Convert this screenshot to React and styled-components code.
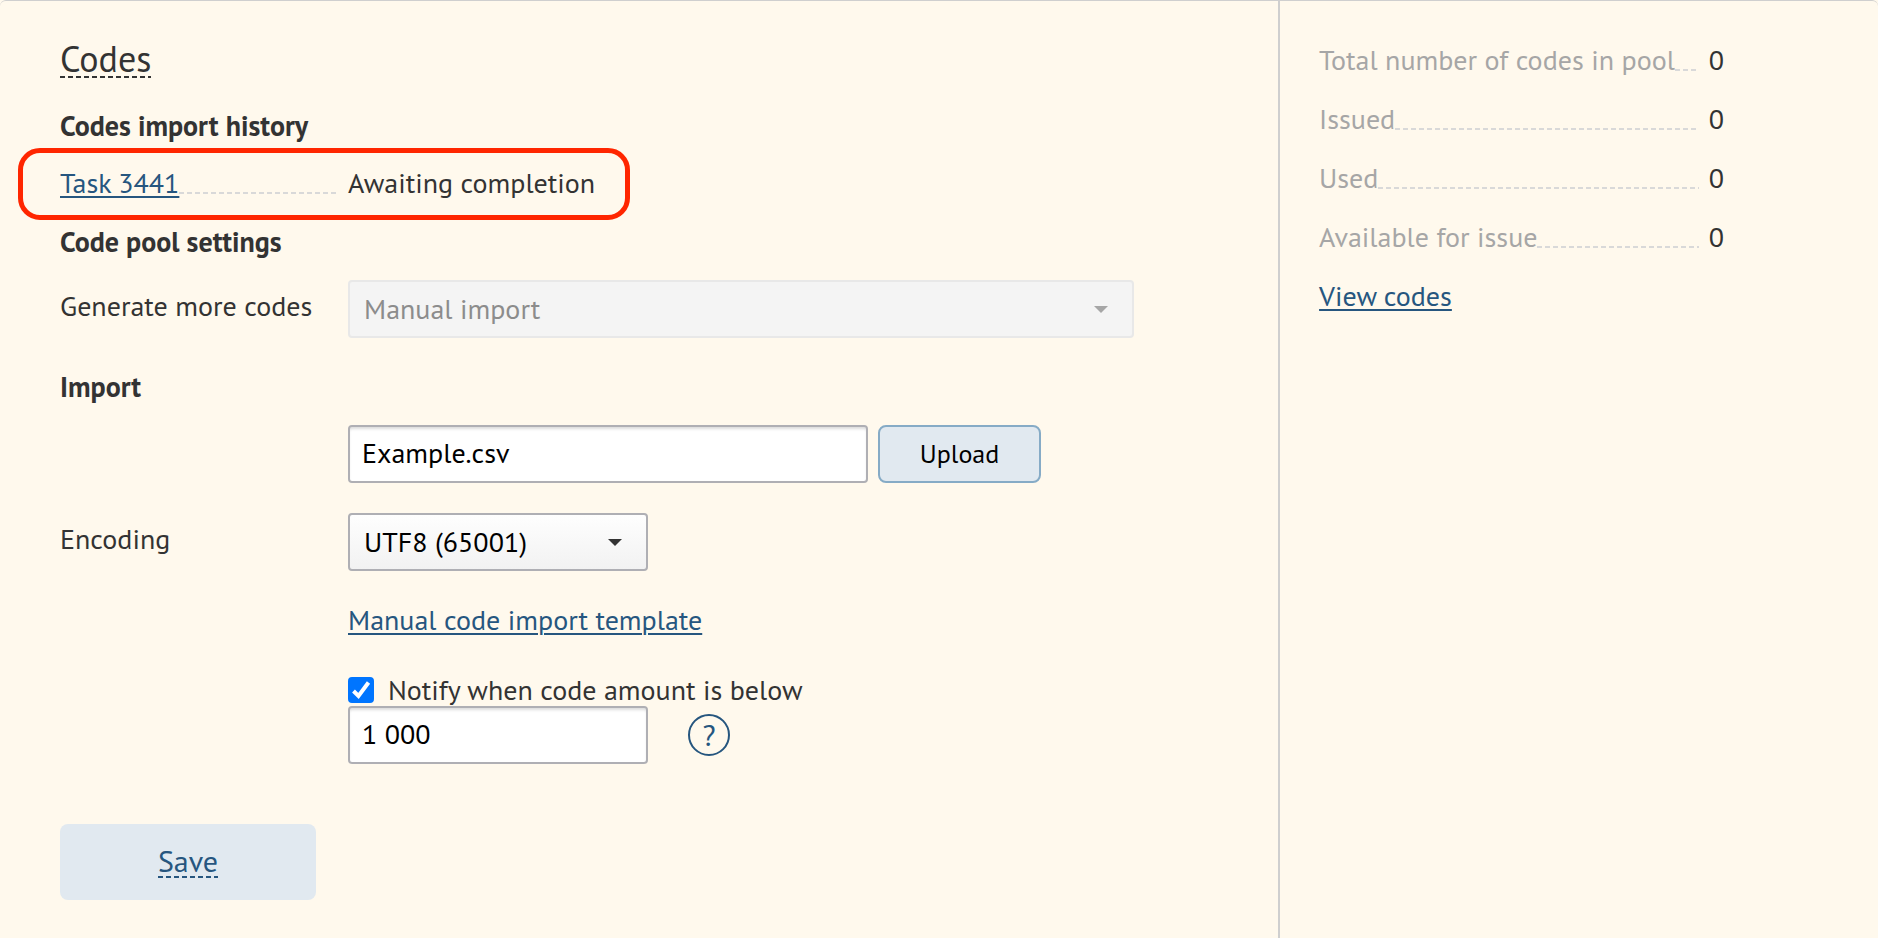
import React from "react";
import styled, { createGlobalStyle, css } from "styled-components";

const c = {
  cream: "#fff9ed",
  text: "#333333",
  muted: "#a6a6a6",
  link: "#26567f",
  line: "#cfcfcf",
  dash: "#d9d9d9",
  field: "#afafb4",
  pale: "#e1e9f0",
  red: "#ff2600",
};

const GlobalStyle = createGlobalStyle`
  *, *::before, *::after { box-sizing: border-box; }
  body {
    margin: 0;
    background: ${c.cream};
    color: ${c.text};
    font-family: "PT Sans", Lato, "Open Sans", sans-serif;
    font-size: 28px;
    line-height: 32px;
  }
  button, input, select { font: inherit; }
`;

const dashes = css`
  background: repeating-linear-gradient(to right, currentColor 0 5px, transparent 5px 8px)
    left bottom / 100% 2px no-repeat;
`;

const Card = styled.div`
  display: grid;
  grid-template-columns: minmax(0, 49fr) minmax(0, 23fr);
  min-height: 100vh;
  border-top: 1px solid ${c.line};
  border-radius: 6px 6px 0 0;
`;

const Form = styled.form`
  padding: 41px 60px 38px;
`;

const Title = styled.h1`
  margin: 0 0 32px;
  font-size: 36px;
  font-weight: 400;
  line-height: 34px;
  display: flex;
`;

const DashedText = styled.span`
  padding-bottom: 2px;
  ${dashes}
`;

const SectionTitle = styled.h2`
  margin: 0;
  font-size: 28px;
  line-height: 32px;
  font-weight: 700;
`;

const Highlight = styled.div`
  width: 612px;
  margin: 6px 0 6px -42px;
  padding: 14px 0 16px 37px;
  border: 5px solid ${c.red};
  border-radius: 22px;
`;

const Row = styled.div`
  display: grid;
  grid-template-columns: 288px minmax(0, 1fr);
  margin: ${(p) => p.$margin || "0"};
`;

const Label = styled.label`
  padding-top: 10px;
`;

const Controls = styled.div`
  grid-column: 2;
  display: flex;
  align-items: center;
  gap: ${(p) => p.$gap || 0}px;
`;

const Leader = styled.div`
  display: flex;
  align-items: flex-start;
  margin-right: 10px;
  &::after {
    content: "";
    flex: 1;
    height: 27px;
    color: ${c.dash};
    ${dashes}
  }
`;

const Link = styled.a`
  color: ${c.link};
  text-decoration: underline;
  text-decoration-thickness: 2px;
  text-underline-offset: 3px;
`;

const fieldBox = css`
  height: 58px;
  border: 2px solid ${c.field};
  border-radius: 4px;
  color: #000;
`;

const TextInput = styled.input`
  ${fieldBox}
  width: ${(p) => p.$width}px;
  padding: 0 12px 4px;
  background: #fff;
  box-shadow: inset 0 3px 3px -1px rgba(0, 0, 0, 0.14);
`;

const SelectWrap = styled.div`
  position: relative;
  width: 100%;
  max-width: ${(p) => p.$width}px;
  svg {
    position: absolute;
    right: 26px;
    top: 26px;
    pointer-events: none;
  }
`;

const Select = styled.select`
  ${fieldBox}
  appearance: none;
  display: block;
  width: 100%;
  padding: 0 48px 0 14px;
  background: linear-gradient(#fefefe, #f2f2f2);
  &:disabled {
    opacity: 1;
    color: #8c8c8c;
    background: #f4f4f4;
    border-color: #e8e8e8;
  }
`;

const UploadButton = styled.button`
  width: 163px;
  height: 58px;
  border: 2px solid #86abc6;
  border-radius: 8px;
  background: ${c.pale};
  color: #000;
  font-size: 26px;
`;

const CheckLabel = styled.label`
  display: flex;
  align-items: center;
  gap: 14px;
`;

const CheckBox = styled.span`
  position: relative;
  display: flex;
  svg {
    position: absolute;
    inset: 0;
    pointer-events: none;
  }
`;

const CheckInput = styled.input`
  appearance: none;
  width: 26px;
  height: 26px;
  margin: 0;
  border-radius: 4px;
  border: 2px solid ${c.field};
  background: #fff;
  &:checked {
    border-color: #0075ff;
    background: #0075ff;
  }
  &:not(:checked) + svg { display: none; }
`;

const HelpButton = styled.button`
  width: 42px;
  height: 42px;
  padding: 0;
  border: 2px solid ${c.link};
  border-radius: 50%;
  background: none;
  color: ${c.link};
  font-size: 30px;
`;

const SaveButton = styled.button`
  display: flex;
  justify-content: center;
  align-items: center;
  width: 256px;
  height: 76px;
  margin-top: 60px;
  border: 0;
  border-radius: 8px;
  background: ${c.pale};
  color: ${c.link};
  font-size: 30px;
  line-height: 30px;
`;

const Summary = styled.aside`
  padding: 43px 39px;
  border-left: 2px solid ${c.line};
`;

const Stats = styled.dl`
  max-width: 405px;
  margin: 0 0 27px;
  display: grid;
  gap: 27px;
`;

const Stat = styled.div`
  display: grid;
  grid-template-columns: minmax(0, 1fr) auto;
`;

const StatName = styled(Leader).attrs({ as: "dt" })`
  color: ${c.muted};
  white-space: nowrap;
`;

const StatValue = styled.dd`
  margin: 0;
`;

const Arrow = ({ color }) => (
  <svg width="14" height="7" viewBox="0 0 14 7" aria-hidden="true">
    <path d="M0 0h14L7 7z" fill={color} />
  </svg>
);

const stats = [
  ["Total number of codes in pool", 0],
  ["Issued", 0],
  ["Used", 0],
  ["Available for issue", 0],
];

export default function App() {
  return (
    <>
      <GlobalStyle />
      <Card>
        <Form onSubmit={(e) => e.preventDefault()}>
          <Title><DashedText>Codes</DashedText></Title>

          <SectionTitle>Codes import history</SectionTitle>
          <Highlight>
            <Row>
              <Leader><Link href="#task-3441">Task 3441</Link></Leader>
              <span>Awaiting completion</span>
            </Row>
          </Highlight>

          <SectionTitle>Code pool settings</SectionTitle>
          <Row $margin="22px 0 33px">
            <Label htmlFor="generate">Generate more codes</Label>
            <SelectWrap $width={786}>
              <Select id="generate" disabled defaultValue="manual">
                <option value="manual">Manual import</option>
              </Select>
              <Arrow color="#a6a6a6" />
            </SelectWrap>
          </Row>

          <SectionTitle>Import</SectionTitle>
          <Row $margin="22px 0 30px">
            <Controls $gap={10}>
              <TextInput $width={520} aria-label="Import file" defaultValue="Example.csv" />
              <UploadButton type="button">Upload</UploadButton>
            </Controls>
          </Row>
          <Row>
            <Label htmlFor="encoding">Encoding</Label>
            <SelectWrap $width={300}>
              <Select id="encoding" defaultValue="utf8">
                <option value="utf8">UTF8 (65001)</option>
              </Select>
              <Arrow color={c.text} />
            </SelectWrap>
          </Row>
          <Row $margin="33px 0 38px">
            <Controls>
              <Link href="#template">Manual code import template</Link>
            </Controls>
          </Row>
          <Row>
            <Controls>
              <CheckLabel>
                <CheckBox>
                  <CheckInput type="checkbox" defaultChecked />
                  <svg width="26" height="26" viewBox="0 0 26 26" aria-hidden="true">
                    <path d="M5.500 14l5 5L20.500 5.500" fill="none" stroke="#fff" strokeWidth="4" />
                  </svg>
                </CheckBox>
                Notify when code amount is below
              </CheckLabel>
            </Controls>
            <Controls $gap={40}>
              <TextInput $width={300} aria-label="Code amount threshold" defaultValue="1 000" />
              <HelpButton type="button" aria-label="Help">?</HelpButton>
            </Controls>
          </Row>

          <SaveButton type="submit"><DashedText>Save</DashedText></SaveButton>
        </Form>

        <Summary>
          <Stats>
            {stats.map(([name, value]) => (
              <Stat key={name}>
                <StatName>{name}</StatName>
                <StatValue>{value}</StatValue>
              </Stat>
            ))}
          </Stats>
          <Link href="#codes">View codes</Link>
        </Summary>
      </Card>
    </>
  );
}
